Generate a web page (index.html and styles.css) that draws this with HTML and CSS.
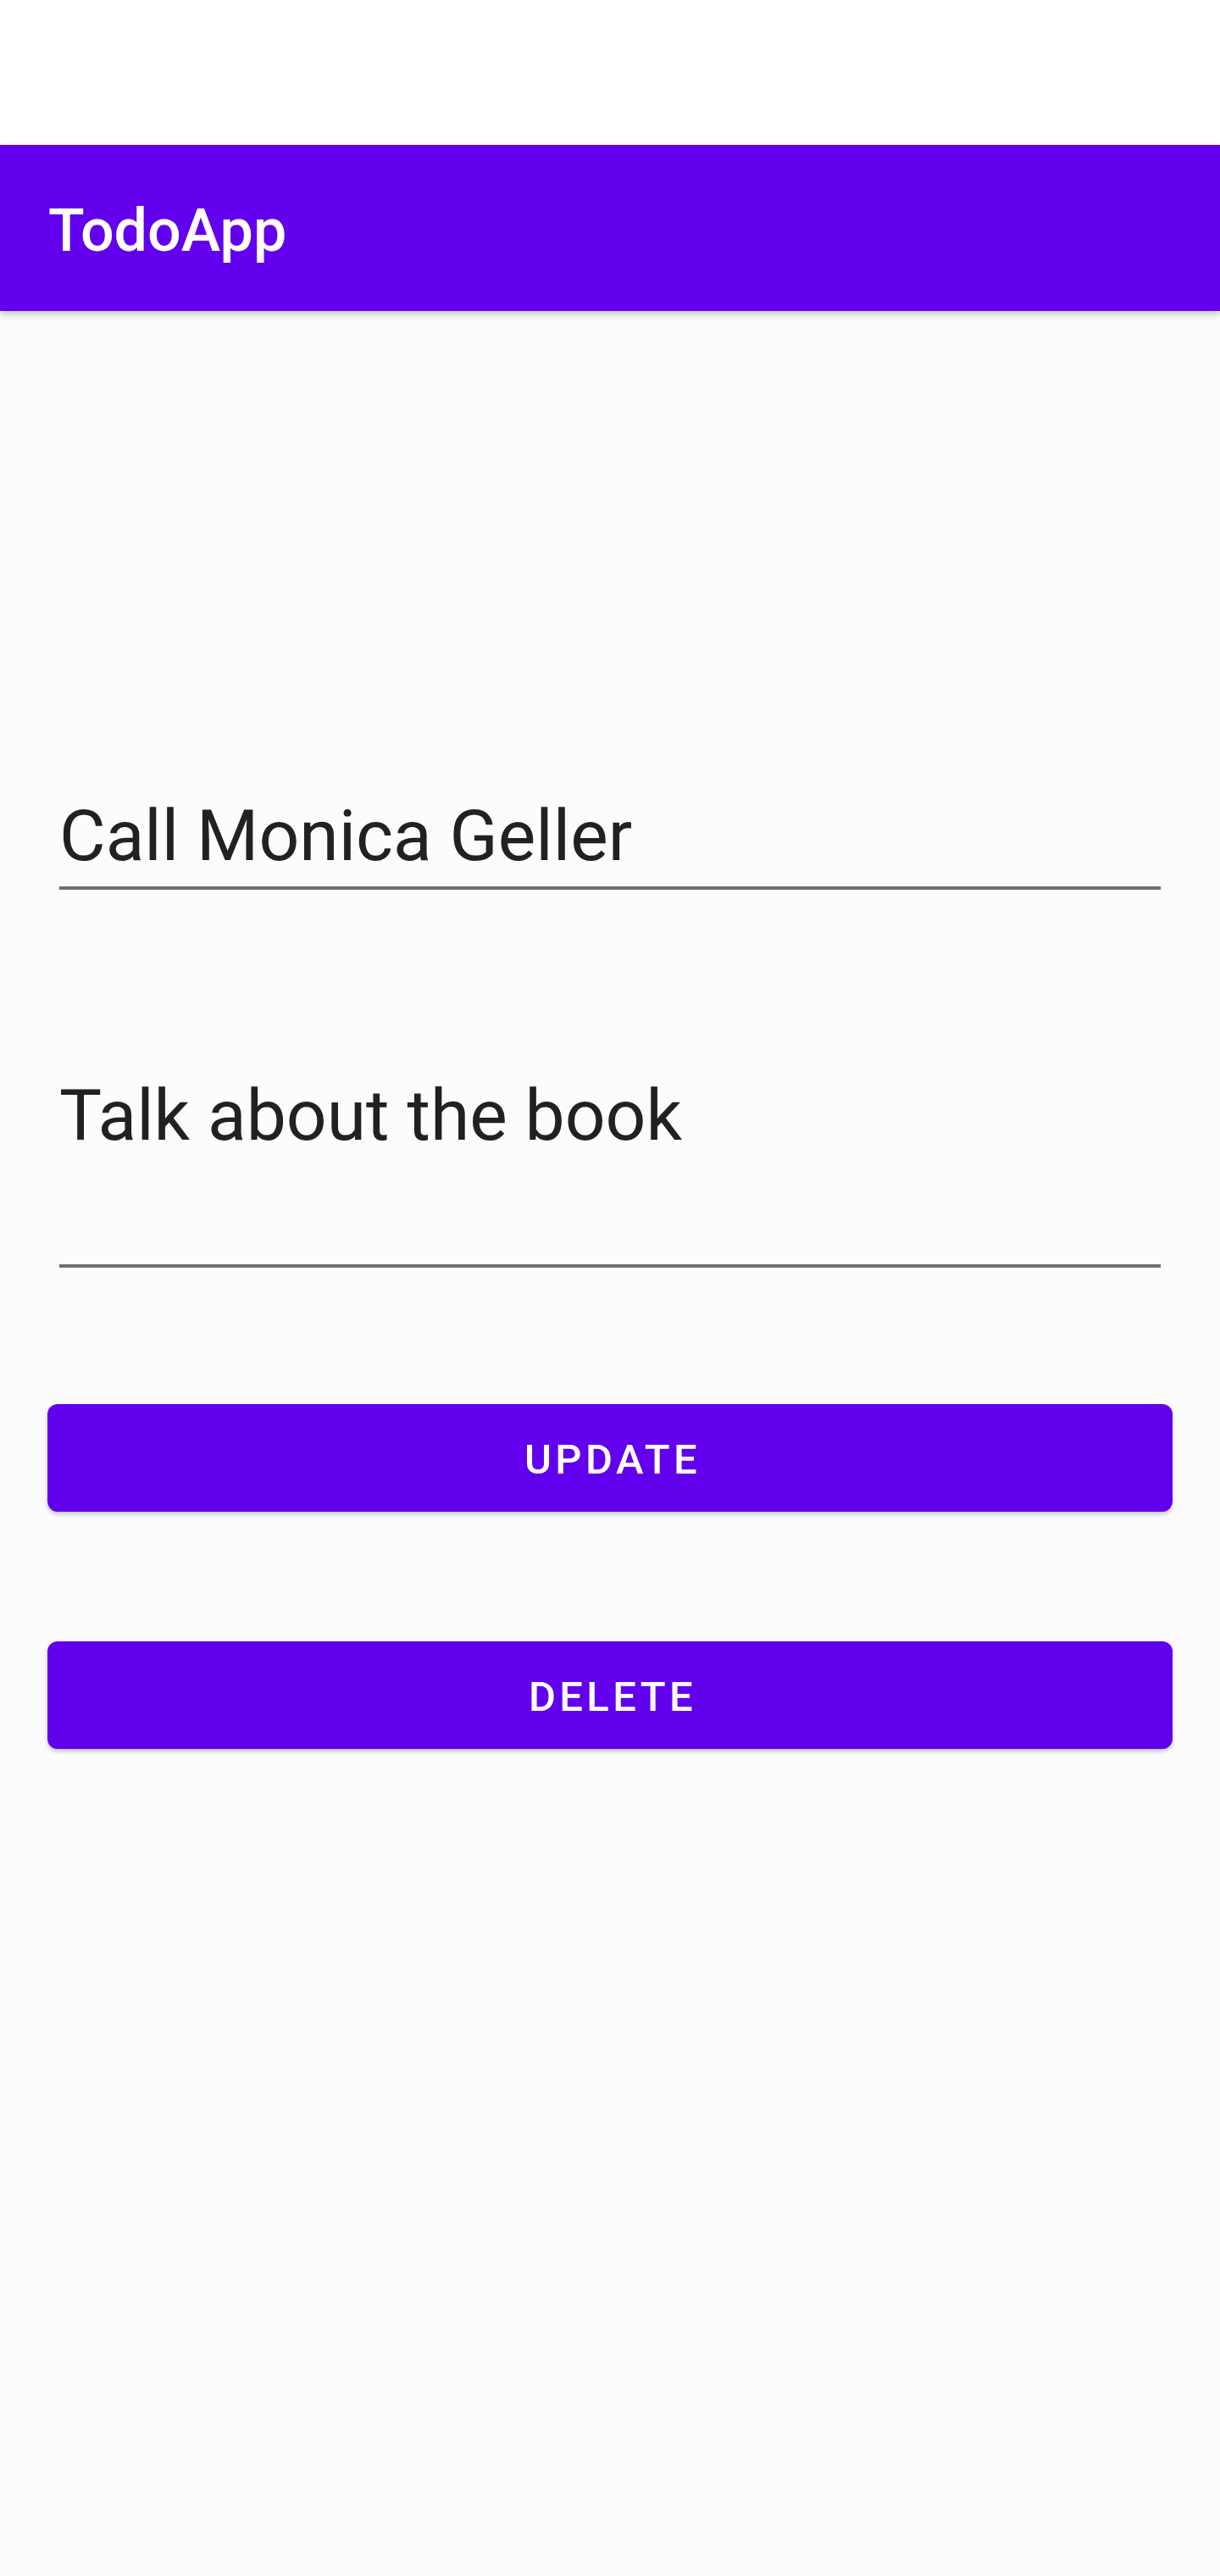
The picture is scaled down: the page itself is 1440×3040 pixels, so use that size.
FILE: index.html
```html
<!DOCTYPE html>
<html lang="en">
<head>
<meta charset="utf-8">
<title>TodoApp</title>
<link rel="stylesheet" href="styles.css">
</head>
<body>
<div class="status"></div>
<header class="appbar"><h1 class="title">TodoApp</h1></header>
<main class="content">
  <div class="field field-title"><span class="field-text">Call Monica Geller</span></div>
  <div class="field field-desc"><span class="field-text">Talk about the book</span></div>
  <button class="btn btn-update">UPDATE</button>
  <button class="btn btn-delete">DELETE</button>
</main>
</body>
</html>
```
FILE: styles.css
```css
html, body {
  margin: 0;
  padding: 0;
}
body {
  background: #fcfcfe;
  font-family: Roboto, "Liberation Sans", sans-serif;
  min-height: 3040px;
}
.status {
  height: 171px;
  background: #ffffff;
}
.appbar {
  height: 196px;
  background: #6200ee;
  display: flex;
  align-items: center;
  padding: 6px 0 0 57px;
  box-sizing: border-box;
  box-shadow: 0 4px 8px rgba(0, 0, 0, 0.22);
  position: relative;
}
.title {
  margin: 0;
  color: #ffffff;
  font-size: 70px;
  font-weight: 500;
  line-height: 82px;
}
.content {
  display: flex;
  flex-direction: column;
  padding: 0 56px;
}
.field {
  margin: 0 14px;
  border-bottom: 4px solid #707074;
  font-size: 84px;
  line-height: 98px;
  color: #212121;
}
.field-title {
  margin-top: 571px;
  padding-bottom: 10px;
}
.field-desc {
  margin-top: 218px;
  padding-bottom: 126px;
}
.field-text {
  display: block;
}
.btn {
  height: 127px;
  border: none;
  border-radius: 12px;
  background: #6200ee;
  color: #ffffff;
  font-family: Roboto, "Liberation Sans", sans-serif;
  font-size: 49px;
  font-weight: 500;
  letter-spacing: 4.4px;
  box-shadow: 0 3px 5px rgba(0, 0, 0, 0.22);
  display: flex;
  align-items: center;
  justify-content: center;
  padding: 3px 0 0 6px;
}
.btn-update {
  margin-top: 161px;
}
.btn-delete {
  margin-top: 153px;
}
```
